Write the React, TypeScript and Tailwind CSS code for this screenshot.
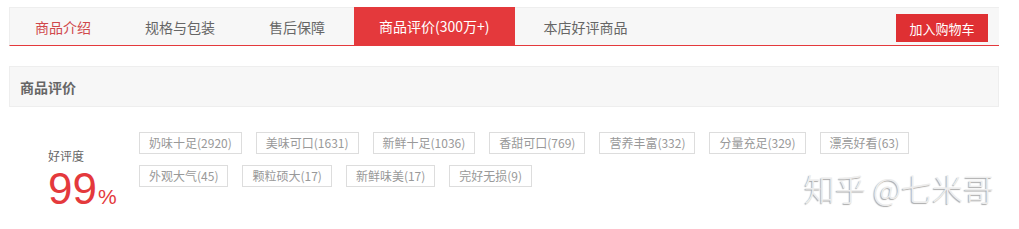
import React from 'react';

const tabs = ['商品介绍', '规格与包装', '售后保障', '商品评价(300万+)', '本店好评商品'];

const tags = [
    '奶味十足(2920)',
    '美味可口(1631)',
    '新鲜十足(1036)',
    '香甜可口(769)',
    '营养丰富(332)',
    '分量充足(329)',
    '漂亮好看(63)',
    '外观大气(45)',
    '颗粒硕大(17)',
    '新鲜味美(17)',
    '完好无损(9)',
];

export default function App() {
    const activeTab = 3;

    return (
        <div className="relative w-[1019px] h-[229px] bg-white overflow-hidden font-['Microsoft_YaHei','Noto_Sans_CJK_SC',sans-serif]">
            {/* Tab bar */}
            <div className="ml-[9px] mt-[7px] w-[990px] h-[39px] flex bg-[#f7f7f7] border-t border-l border-[#eeeeee] border-b border-b-[#e4393c]">
                <div className="flex gap-1">
                    {tabs.map((tab, i) => (
                        <div
                            key={tab}
                            className={`px-[25px] flex items-center text-[14px] leading-none ${
                                i === activeTab
                                    ? 'bg-[#e4393c] text-white -mt-px'
                                    : i === 0
                                    ? 'text-[#d0484b]'
                                    : 'text-[#666666]'
                            }`}
                        >
                            {tab}
                        </div>
                    ))}
                </div>
                <button className="ml-auto mr-[11px] mt-[6px] w-[92px] h-[28px] bg-[#df3033] text-white text-[13px] leading-none flex items-center justify-center">
                    加入购物车
                </button>
            </div>

            {/* Section header */}
            <div className="ml-[9px] mt-[20px] w-[990px] h-[41px] bg-[#f7f7f7] border border-[#eeeeee] flex items-center pl-[10px]">
                <span className="text-[14px] font-bold text-[#666666] leading-none">商品评价</span>
            </div>

            {/* Rating */}
            <div className="ml-[9px] mt-[25px] flex">
                <div className="w-[130px] pl-[39px] pt-[15px]">
                    <div className="text-[12px] leading-[18px] text-[#666666]">好评度</div>
                    <div className="mt-[2px] flex items-baseline text-[#e4393c] font-['Liberation_Sans',Arial,sans-serif]">
                        <span className="text-[44px] leading-[44px]">99</span>
                        <span className="text-[21px] leading-none ml-px">%</span>
                    </div>
                </div>
                <div className="w-[790px] flex flex-wrap gap-x-[14px] gap-y-[11px] content-start">
                    {tags.map((tag) => (
                        <span
                            key={tag}
                            className="h-[22px] px-[9px] border border-[#dddddd] text-[12px] leading-[20px] text-[#999999]"
                        >
                            {tag}
                        </span>
                    ))}
                </div>
            </div>

            {/* Watermark */}
            <div className="absolute left-[804px] top-[168px] text-[31px] leading-[40px] font-light text-[#ededed] [text-shadow:-1px_1px_1px_#a8a8a8] whitespace-nowrap">
                知乎 @七米哥
            </div>
        </div>
    );
}
